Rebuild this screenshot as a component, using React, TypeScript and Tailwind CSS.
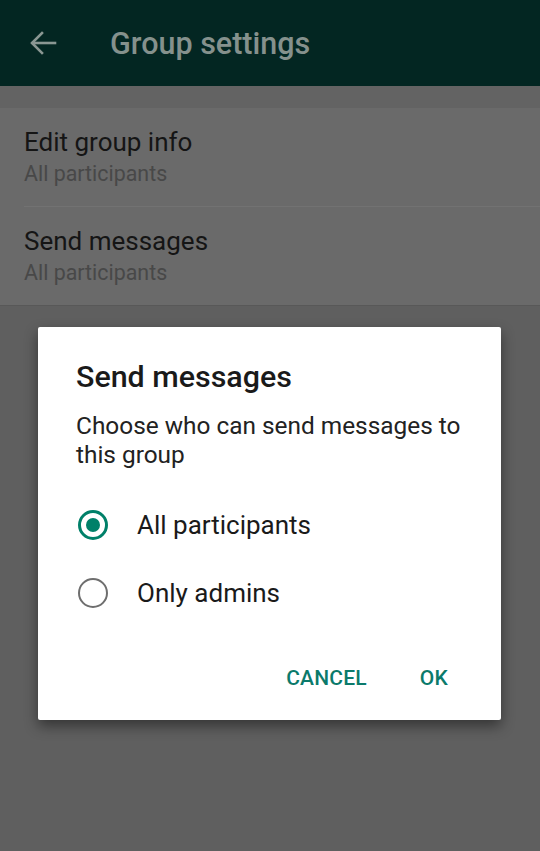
import React from "react";

function Radio({ checked }: { checked: boolean }) {
  return checked ? (
    <div className="w-[30px] h-[30px] rounded-full border-[3px] border-[#008069] flex items-center justify-center">
      <div className="w-[14px] h-[14px] rounded-full bg-[#008069]" />
    </div>
  ) : (
    <div className="w-[30px] h-[30px] rounded-full border-[2.5px] border-[#6e6e6e]" />
  );
}

export default function App() {
  return (
    <div
      className="relative w-[540px] min-h-[851px] bg-[#5f5f5f] flex flex-col"
      style={{ fontFamily: "Roboto, 'Noto Sans', sans-serif" }}
    >
      <header className="h-[86px] bg-[#032622] flex items-center">
        <div className="w-[110px] pl-[29px] flex items-center">
          <svg width="28" height="26" viewBox="0 0 28 26" fill="none" stroke="#8a9793" strokeWidth="2.6" strokeLinecap="square">
            <path d="M26 13H4" />
            <path d="M13 3L3 13l10 10" />
          </svg>
        </div>
        <div className="text-[30.5px] font-medium text-[#85918d] leading-none pt-[3px]">Group settings</div>
      </header>
      <div className="h-[22px] bg-[#636363]" />
      <div className="bg-[#6a6a6a] border-b border-[#585858]">
        <div className="pl-[24px] pt-[18px] pb-[18px]">
          <div className="text-[26px] leading-[32px] text-[#151515]">Edit group info</div>
          <div className="mt-[2px] text-[21.4px] leading-[28px] text-[#484848]">All participants</div>
        </div>
        <div className="ml-[24px] h-px bg-[#727272]" />
        <div className="pl-[24px] pt-[18px] pb-[18px]">
          <div className="text-[26px] leading-[32px] text-[#151515]">Send messages</div>
          <div className="mt-[2px] text-[21.4px] leading-[28px] text-[#484848]">All participants</div>
        </div>
      </div>

      <div className="absolute left-[38px] top-[327px] w-[463px] bg-white rounded-[2px] shadow-[0_6px_14px_rgba(0,0,0,0.45)] pt-[33px] pb-[17px]">
        <div className="pl-[38px] text-[30.4px] leading-[34px] font-medium text-[#1a1a1a]">Send messages</div>
        <div className="pl-[38px] pr-[26px] mt-[17px] text-[24.4px] leading-[29px] text-[#222]">
          Choose who can send messages to this group
        </div>
        <div className="mt-[22px]">
          <div className="h-[68px] flex items-center pl-[40px]">
            <Radio checked />
            <div className="ml-[29px] text-[26px] text-[#1a1a1a]">All participants</div>
          </div>
          <div className="h-[68px] flex items-center pl-[40px]">
            <Radio checked={false} />
            <div className="ml-[29px] text-[26px] text-[#1a1a1a]">Only admins</div>
          </div>
        </div>
        <div className="mt-[28px] h-[48px] flex items-center justify-end gap-[53px] pr-[53px]">
          <div className="text-[21px] font-medium text-[#0b7a6b] tracking-[0.2px]">CANCEL</div>
          <div className="text-[21px] font-medium text-[#0b7a6b] tracking-[0.2px]">OK</div>
        </div>
      </div>
    </div>
  );
}
